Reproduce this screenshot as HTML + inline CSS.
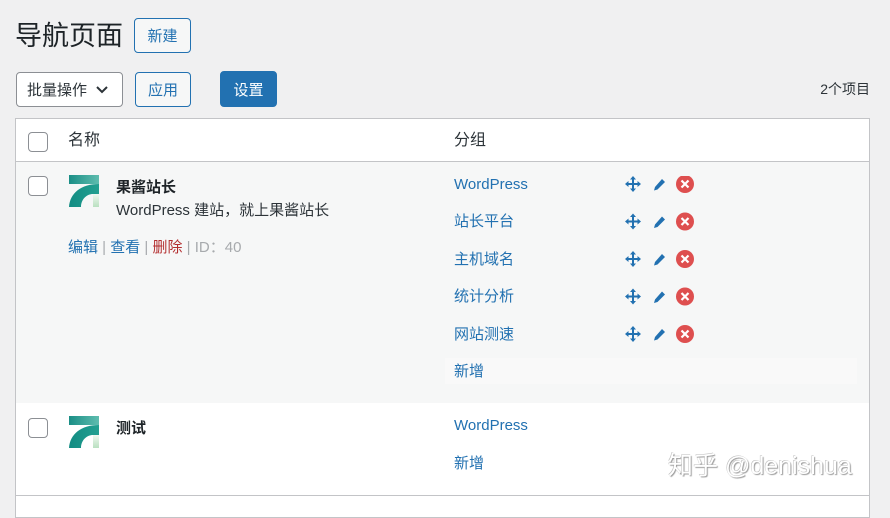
<!DOCTYPE html>
<html><head><meta charset="utf-8"><style>
*{box-sizing:border-box;margin:0;padding:0}
body{width:890px;height:500px;background:#f0f0f1;font-family:"Liberation Sans","Noto Sans CJK SC",sans-serif;color:#1d2327;position:relative;overflow:hidden;font-size:15px}
.a{position:absolute;white-space:nowrap;line-height:20px}
.btn{position:absolute;border:1px solid #2271b1;border-radius:4px;color:#2271b1;background:#f6f7f7;font-size:15px;display:flex;align-items:center;justify-content:center}
.cb{position:absolute;width:20px;height:20px;border:1px solid #8c8f94;border-radius:4px;background:#fff}
.lk{color:#2271b1}
.ic{position:absolute}
</style></head><body>
<div class="a" style="left:15px;top:16px;font-size:27px;line-height:40px;color:#1d2327">导航页面</div>
<div class="btn" style="left:134px;top:18px;width:57px;height:35px">新建</div>
<div class="btn" style="left:16px;top:72px;width:107px;height:35px;border-color:#8c8f94;color:#2c3338;background:#fff;justify-content:flex-start;padding-left:10px">批量操作<svg width="14" height="10" viewBox="0 0 14 10" style="margin-left:8px"><path d="M2 2l5 5 5-5" stroke="#2c3338" stroke-width="2" fill="none"/></svg></div>
<div class="btn" style="left:135px;top:72px;width:56px;height:35px">应用</div>
<div class="btn" style="left:220px;top:71px;width:57px;height:36px;background:#2271b1;color:#fff">设置</div>
<div class="a" style="right:20px;top:79px;font-size:14px;color:#2c3338">2个项目</div>

<div class="a" style="left:15px;top:118px;width:855px;height:400px;background:#fff;border:1px solid #c3c4c7"></div>
<div class="a" style="left:16px;top:161px;width:853px;height:1px;background:#c3c4c7"></div>
<div class="a" style="left:16px;top:162px;width:853px;height:241px;background:#f6f7f7"></div>
<div class="a" style="left:445px;top:358px;width:412px;height:26px;background:#f9f9f9"></div>
<div class="a" style="left:16px;top:495px;width:853px;height:1px;background:#c3c4c7"></div>

<div class="cb" style="left:28px;top:132px"></div>
<div class="a" style="left:68px;top:131px;font-size:16px;color:#2c3338">名称</div>
<div class="a" style="left:454px;top:131px;font-size:16px;color:#2c3338">分组</div>

<svg width="0" height="0" style="position:absolute"><defs>
<linearGradient id="g" x1="0" x2="1"><stop offset="0" stop-color="#138c83"/><stop offset="1" stop-color="#23a091"/></linearGradient>
<linearGradient id="t" x1="0" x2="1"><stop offset="0" stop-color="#1a8e86"/><stop offset="1" stop-color="#5fbdaf"/></linearGradient>
<linearGradient id="h" x1="0" x2="0" y1="0" y2="1"><stop offset="0" stop-color="#f0f8f0"/><stop offset="1" stop-color="#b9e0c0"/></linearGradient>
<g id="logo"><rect x="0" y="0" width="30" height="9" fill="url(#t)"/><path d="M30 9C12 9 1 18 0 32H12C12 24 18 19 24 19H30Z" fill="url(#g)"/><rect x="24" y="19" width="6" height="13" fill="url(#h)"/></g>
<g id="mv"><path d="M8 0l3 3.5H9V7h3.5V5L16 8l-3.5 3V9H9v3.5h2L8 16l-3-3.5h2V9H3.5v2L0 8l3.5-3v2H7V3.5H5z" fill="#2271b1"/></g>
<g id="pc"><path d="M10 1l3 3-7.5 7.5-3.5 1 1-3.5z" fill="#2271b1"/></g>
<g id="xx"><circle cx="9" cy="9" r="9" fill="#de4f4f"/><path d="M5.5 5.5l7 7M12.5 5.5l-7 7" stroke="#fff" stroke-width="2.2"/></g>
</defs></svg>

<div class="cb" style="left:28px;top:176px"></div>
<svg class="ic" style="left:69px;top:175px" width="33" height="33"><use href="#logo"/></svg>
<div class="a" style="left:116px;top:178px;font-size:15px;font-weight:bold">果酱站长</div>
<div class="a" style="left:116px;top:201px;font-size:15px;color:#2c3338">WordPress 建站，就上果酱站长</div>
<div class="a" style="left:68px;top:238px;font-size:15px;color:#a7aaad"><span class="lk">编辑</span> | <span class="lk">查看</span> | <span style="color:#b32d2e">删除</span> | ID：40</div>

<div class="cb" style="left:28px;top:418px"></div>
<svg class="ic" style="left:69px;top:416px" width="33" height="33"><use href="#logo"/></svg>
<div class="a" style="left:116px;top:419px;font-size:15px;font-weight:bold">测试</div>

<div class="a lk" style="left:454px;top:175px">WordPress</div>
<div class="a lk" style="left:454px;top:212px">站长平台</div>
<div class="a lk" style="left:454px;top:250px">主机域名</div>
<div class="a lk" style="left:454px;top:287px">统计分析</div>
<div class="a lk" style="left:454px;top:325px">网站测速</div>
<div class="a lk" style="left:454px;top:362px">新增</div>
<div class="a lk" style="left:454px;top:416px">WordPress</div>
<div class="a lk" style="left:454px;top:454px">新增</div>

<svg class="ic" style="left:625px;top:176px" width="80" height="170">
<g transform="translate(0,0)"><use href="#mv"/><use href="#pc" x="27" y="2"/><use href="#xx" x="51" y="-1"/></g>
<g transform="translate(0,37.5)"><use href="#mv"/><use href="#pc" x="27" y="2"/><use href="#xx" x="51" y="-1"/></g>
<g transform="translate(0,75)"><use href="#mv"/><use href="#pc" x="27" y="2"/><use href="#xx" x="51" y="-1"/></g>
<g transform="translate(0,112.5)"><use href="#mv"/><use href="#pc" x="27" y="2"/><use href="#xx" x="51" y="-1"/></g>
<g transform="translate(0,150)"><use href="#mv"/><use href="#pc" x="27" y="2"/><use href="#xx" x="51" y="-1"/></g>
</svg>

<div class="a" style="left:668px;top:450px;font-size:25px;line-height:32px;color:#fff;text-shadow:1px 1px 1px #999,-0.5px -0.5px 0 #bbb">知乎 @denishua</div>
</body></html>
